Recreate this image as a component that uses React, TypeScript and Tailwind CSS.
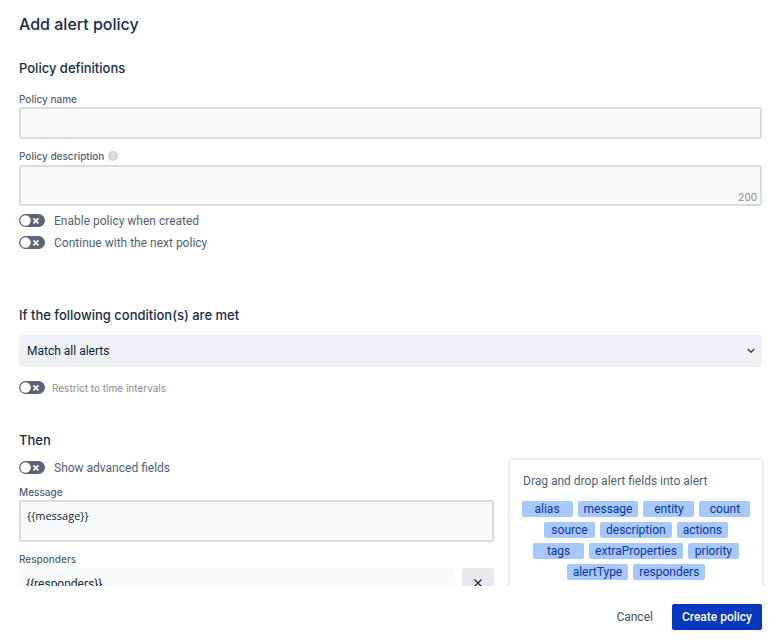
import React, { useState } from 'react';

const alertFields = [
  'alias',
  'message',
  'entity',
  'count',
  'source',
  'description',
  'actions',
  'tags',
  'extraProperties',
  'priority',
  'alertType',
  'responders',
];

type ToggleProps = {
  id: string;
  label: string;
  small?: boolean;
};

const Toggle: React.FC<ToggleProps> = ({ id, label, small }) => {
  const [checked, setChecked] = useState(false);

  return (
    <div className={small ? 'flex items-start gap-[7px]' : 'flex items-start gap-[9px]'}>
      <label htmlFor={id} className="relative mt-px block h-[13px] w-[26px] cursor-pointer">
        <input
          id={id}
          type="checkbox"
          aria-label={label}
          checked={checked}
          onChange={(e) => setChecked(e.target.checked)}
          className="peer sr-only"
        />
        <svg
          viewBox="0 0 26 13"
          className="block h-[13px] w-[26px] text-[#5b647b] peer-checked:-scale-x-100 peer-checked:text-green-700"
        >
          <rect width="26" height="13" rx="6.5" fill="currentColor" />
          <circle cx="6.5" cy="6.5" r="5.2" fill="#fff" />
          <path d="M14.4 4.4l5 5M19.4 4.4l-5 5" stroke="#fff" strokeWidth="1.7" />
        </svg>
      </label>
      <label
        htmlFor={id}
        className={
          small
            ? 'cursor-pointer text-[10px] leading-4 text-[#8c8c8c]'
            : "cursor-pointer font-['Roboto',sans-serif] text-[12px] leading-4 text-[#505f79]"
        }
      >
        {label}
      </label>
    </div>
  );
};

const labelClass = 'text-[10px] leading-4 font-medium text-[#505f79]';
const headingClass = 'text-[13px] leading-5 font-medium text-[#172b4d]';
const fieldClass =
  'block w-full rounded-[3px] border-2 border-[#dadbe1] bg-[#f9fafc] px-1.5 text-[11px] text-[#091e42] outline-none focus:border-blue-500';

const App: React.FC = () => {
  const [name, setName] = useState('');
  const [description, setDescription] = useState('');
  const [message, setMessage] = useState('{{message}}');
  const [responders, setResponders] = useState('{{responders}}');

  return (
    <form
      onSubmit={(e) => e.preventDefault()}
      className="flex h-screen flex-col bg-white font-['Inter',sans-serif] text-[#172b4d]"
    >
      <main className="min-h-0 flex-1 overflow-y-auto pr-[15px] pl-[19px] [scrollbar-width:none]">
        <h1 className="pt-3 text-[16px] leading-6 font-medium">Add alert policy</h1>

        <section className="pt-[22px]">
          <h2 className={headingClass}>Policy definitions</h2>
          <div className="pt-[13px]">
            <label htmlFor="name" className={`${labelClass} block`}>
              Policy name
            </label>
            <input
              id="name"
              type="text"
              value={name}
              onChange={(e) => setName(e.target.value)}
              className={`${fieldClass} h-8`}
            />
          </div>
          <div className="pt-[9px]">
            <div className="flex items-center gap-1 pb-px">
              <label htmlFor="description" className={labelClass}>
                Policy description
              </label>
              <svg viewBox="0 0 10 10" className="size-[10px]" aria-hidden="true">
                <circle cx="5" cy="5" r="5" fill="#d0d3da" />
                <path
                  d="M3.6 4a1.4 1.4 0 1 1 2 1.25Q5 5.5 5 6.1M5 7v.9"
                  fill="none"
                  stroke="#fff"
                  strokeWidth="0.9"
                />
              </svg>
            </div>
            <div className="relative">
              <textarea
                id="description"
                maxLength={200}
                value={description}
                onChange={(e) => setDescription(e.target.value)}
                className={`${fieldClass} h-[41px] resize-none`}
              />
              <span className="absolute right-[5px] bottom-px text-[10px] leading-4 text-[#8c8c8c]">
                {200 - description.length}
              </span>
            </div>
          </div>
          <div className="flex flex-col gap-[6px] pt-[7px]">
            <Toggle id="enable" label="Enable policy when created" />
            <Toggle id="continue" label="Continue with the next policy" />
          </div>
        </section>

        <section className="pt-[54px]">
          <h2 className={headingClass}>If the following condition(s) are met</h2>
          <div className="relative mt-[10px] mb-[13px]">
            <select
              aria-label="Conditions"
              className="block h-8 w-full appearance-none rounded-[3px] bg-[#f0f1f5] px-2 font-['Roboto',sans-serif] text-[12px] text-[#091e42] outline-none"
            >
              <option>Match all alerts</option>
              <option>Match one or more conditions below</option>
              <option>Match all conditions below</option>
            </select>
            <svg
              viewBox="0 0 8 6"
              className="pointer-events-none absolute top-[13px] right-[7px] h-[6px] w-2"
              aria-hidden="true"
            >
              <path
                d="M1 1.2l3 3 3-3"
                fill="none"
                stroke="#344563"
                strokeWidth="1.4"
                strokeLinecap="round"
                strokeLinejoin="round"
              />
            </svg>
          </div>
          <Toggle id="restrict" label="Restrict to time intervals" small />
        </section>

        <section className="pt-[34px]">
          <h2 className={headingClass}>Then</h2>
          <div className="flex items-start gap-4">
            <div className="min-w-0 flex-1 pt-[10px]">
              <Toggle id="advanced" label="Show advanced fields" />
              <div className="pt-2">
                <label htmlFor="message" className={`${labelClass} block`}>
                  Message
                </label>
                <textarea
                  id="message"
                  value={message}
                  onChange={(e) => setMessage(e.target.value)}
                  className={`${fieldClass} h-[42px] resize-none pt-[6px] font-['Open_Sans',sans-serif] leading-4`}
                />
              </div>
              <div className="pt-[9px]">
                <label htmlFor="responders" className={`${labelClass} block pb-px`}>
                  Responders
                </label>
                <div className="flex gap-[7px]">
                  <input
                    id="responders"
                    type="text"
                    value={responders}
                    onChange={(e) => setResponders(e.target.value)}
                    className="h-8 min-w-0 flex-1 rounded-[3px] bg-[#f9fafc] px-[7px] font-['Roboto',sans-serif] text-[12px] text-[#172b4d] outline-none"
                  />
                  <button
                    type="button"
                    aria-label="Remove responders"
                    onClick={() => setResponders('')}
                    className="flex h-8 w-8 justify-center rounded-[3px] bg-[#e8e9ed] pt-[11px]"
                  >
                    <svg viewBox="0 0 8 8" className="size-2">
                      <path d="M.5.5l7 7M7.5.5l-7 7" stroke="#172b4d" strokeWidth="1.3" />
                    </svg>
                  </button>
                </div>
              </div>
            </div>

            <aside className="mt-[10px] min-h-[160px] w-[252px] rounded-[4px] bg-white px-[10px] pt-[13px] font-['Roboto',sans-serif] text-[12px] leading-4 shadow-[0_0_4px_rgba(9,30,66,0.25)]">
              <p className="px-[3px] text-[#505f79]">Drag and drop alert fields into alert</p>
              <ul className="flex flex-wrap justify-center gap-[5px] pt-3">
                {alertFields.map((field) => (
                  <li
                    key={field}
                    draggable
                    className="min-w-[51px] cursor-move rounded-[2px] bg-[#a6c8fa] px-[6px] text-center text-[#0a35b0]"
                  >
                    {field}
                  </li>
                ))}
              </ul>
            </aside>
          </div>
        </section>
      </main>

      <footer className="flex h-[57px] shrink-0 items-center justify-end gap-[9px] bg-white pt-[5px] pr-[15px] font-['Roboto',sans-serif] text-[12px]">
        <button type="button" className="h-[26px] px-[10px] text-[#42526e]">
          Cancel
        </button>
        <button
          type="submit"
          className="h-[26px] rounded-[2px] bg-[#0438c0] px-[10px] font-medium text-white"
        >
          Create policy
        </button>
      </footer>
    </form>
  );
};

export default App;
